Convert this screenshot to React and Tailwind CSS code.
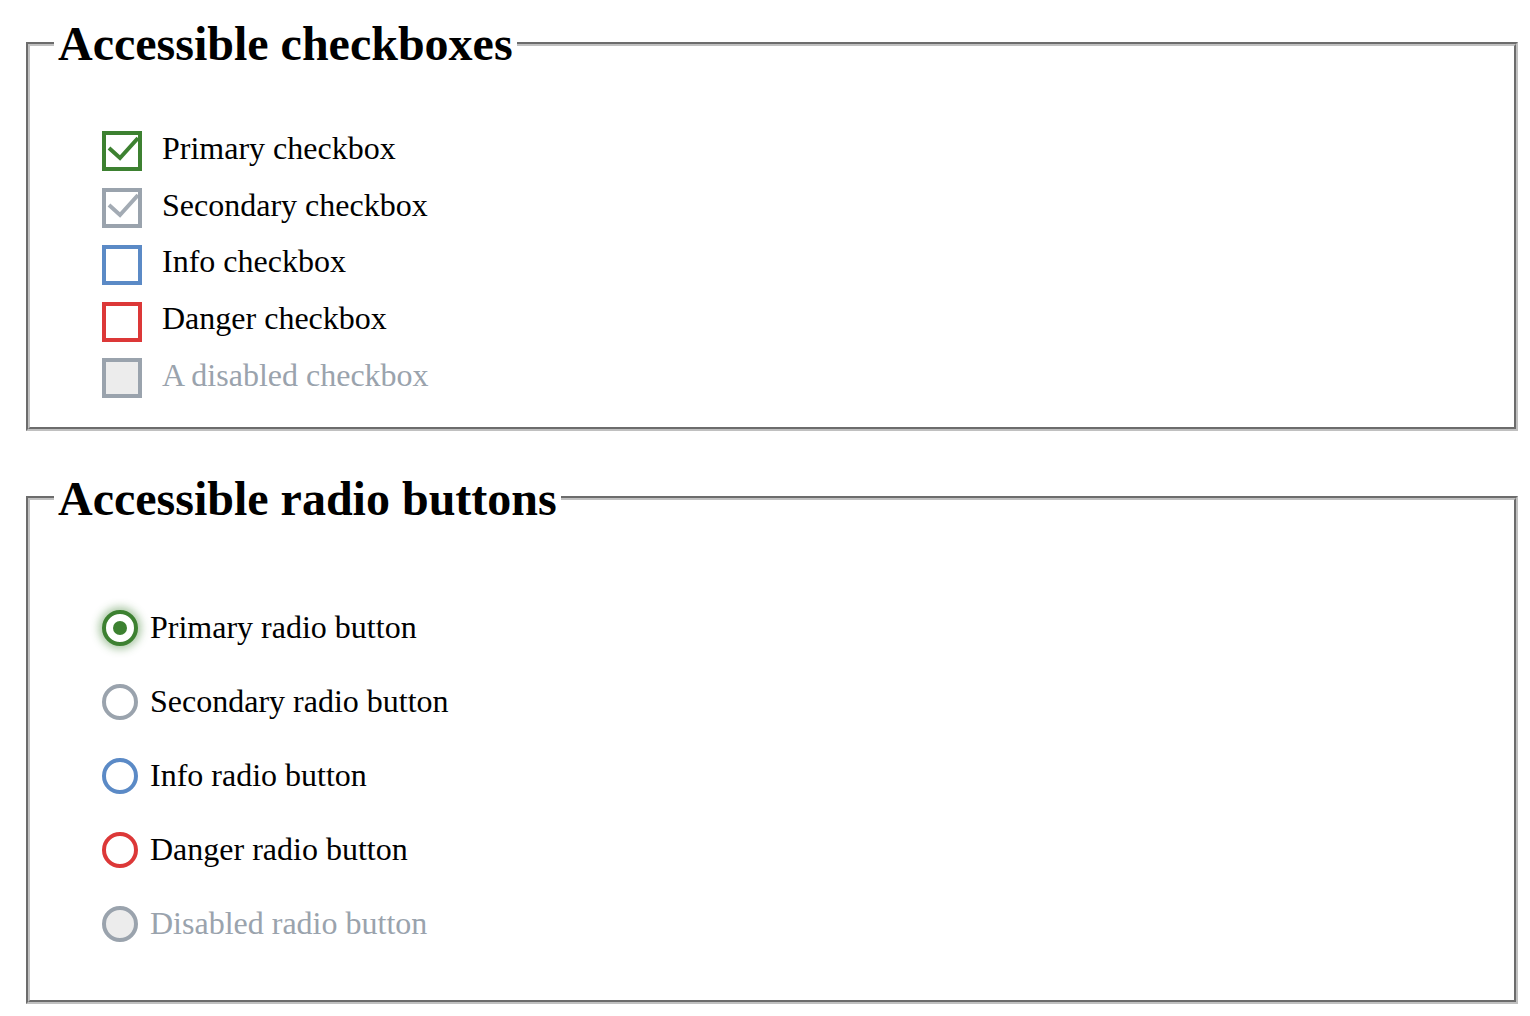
import React from "react";

const checkboxes = [
  { label: "Primary checkbox", border: "border-[#3d8131]", check: "#3d8131", checked: true },
  { label: "Secondary checkbox", border: "border-[#9aa3ad]", check: "#a3abb4", checked: true },
  { label: "Info checkbox", border: "border-[#5b8ac6]" },
  { label: "Danger checkbox", border: "border-[#dc3838]" },
  { label: "A disabled checkbox", border: "border-[#9aa3ad]", disabled: true },
];

const radios = [
  { label: "Primary radio button", border: "border-[#3d8131]", checked: true },
  { label: "Secondary radio button", border: "border-[#9aa3ad]" },
  { label: "Info radio button", border: "border-[#5b8ac6]" },
  { label: "Danger radio button", border: "border-[#dc3838]" },
  { label: "Disabled radio button", border: "border-[#9aa3ad]", disabled: true },
];

function Box({ item }) {
  return (
    <span
      className={`w-[40px] h-[40px] border-[4px] ${item.border} ${item.disabled ? "bg-[#ececec]" : "bg-white"} flex items-center justify-center shrink-0`}
    >
      {item.checked && (
        <svg width="32" height="32" viewBox="0 0 32 32">
          <path d="M3 13 L14 23 L32 3" fill="none" stroke={item.check} strokeWidth="4" />
        </svg>
      )}
    </span>
  );
}

function Radio({ item }) {
  return (
    <span
      className={`w-[36px] h-[36px] rounded-full border-[4px] ${item.border} ${item.disabled ? "bg-[#ececec]" : "bg-white"} ${item.checked ? "shadow-[0_0_8px_3px_rgba(61,129,49,0.45)]" : ""} flex items-center justify-center shrink-0`}
    >
      {item.checked && <span className="w-[14px] h-[14px] rounded-full bg-[#3d8131]" />}
    </span>
  );
}

export default function App() {
  return (
    <div className="bg-white min-h-[1016px] pt-[16px] font-['Liberation_Serif','Times_New_Roman',serif] text-black text-[32px]">
      {/* CHECKBOXES */}
      <fieldset className="ml-[26px] w-[1492px] border-[4px] [border-style:groove] border-[#c0c0c0] pl-[24px] pr-[24px] pb-[20px]">
        <legend className="px-[4px] text-[48px] font-bold leading-[55px]">Accessible checkboxes</legend>
        <div className="pt-[52px] pl-[48px] flex flex-col">
          {checkboxes.map((c) => (
            <label key={c.label} className="h-[56.75px] flex items-center gap-[20px]">
              <Box item={c} />
              <span className={`leading-[37px] -translate-y-[3px] ${c.disabled ? "text-[#9aa3ad]" : "text-black"}`}>{c.label}</span>
            </label>
          ))}
        </div>
      </fieldset>

      {/* RADIOS */}
      <fieldset className="mt-[40px] ml-[26px] w-[1492px] border-[4px] [border-style:groove] border-[#c0c0c0] pl-[24px] pr-[24px] pb-[39px]">
        <legend className="px-[4px] text-[48px] font-bold leading-[55px]">Accessible radio buttons</legend>
        <div className="pt-[65px] pl-[48px] flex flex-col">
          {radios.map((r) => (
            <label key={r.label} className="h-[74px] flex items-center gap-[12px]">
              <Radio item={r} />
              <span className={`leading-[37px] ${r.disabled ? "text-[#9aa3ad]" : "text-black"}`}>{r.label}</span>
            </label>
          ))}
        </div>
      </fieldset>
    </div>
  );
}
